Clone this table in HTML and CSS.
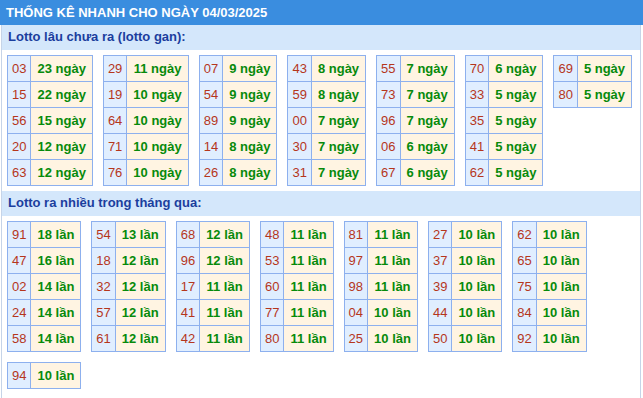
FILE: index.html
```html
<!DOCTYPE html>
<html lang="vi">
<head>
<meta charset="utf-8">
<title>Thống kê nhanh</title>
<link rel="stylesheet" href="styles.css">
</head>
<body>
<div class="header">THỐNG KÊ NHANH CHO NGÀY 04/03/2025</div>
<div class="box">
  <div class="band">Lotto lâu chưa ra (lotto gan):</div>
  <div class="grid">
    <table class="tb"><tr><td class="n">03</td><td class="v">23 ngày</td></tr><tr><td class="n">15</td><td class="v">22 ngày</td></tr><tr><td class="n">56</td><td class="v">15 ngày</td></tr><tr><td class="n">20</td><td class="v">12 ngày</td></tr><tr><td class="n">63</td><td class="v">12 ngày</td></tr></table>
    <table class="tb"><tr><td class="n">29</td><td class="v">11 ngày</td></tr><tr><td class="n">19</td><td class="v">10 ngày</td></tr><tr><td class="n">64</td><td class="v">10 ngày</td></tr><tr><td class="n">71</td><td class="v">10 ngày</td></tr><tr><td class="n">76</td><td class="v">10 ngày</td></tr></table>
    <table class="tb"><tr><td class="n">07</td><td class="v">9 ngày</td></tr><tr><td class="n">54</td><td class="v">9 ngày</td></tr><tr><td class="n">89</td><td class="v">9 ngày</td></tr><tr><td class="n">14</td><td class="v">8 ngày</td></tr><tr><td class="n">26</td><td class="v">8 ngày</td></tr></table>
    <table class="tb"><tr><td class="n">43</td><td class="v">8 ngày</td></tr><tr><td class="n">59</td><td class="v">8 ngày</td></tr><tr><td class="n">00</td><td class="v">7 ngày</td></tr><tr><td class="n">30</td><td class="v">7 ngày</td></tr><tr><td class="n">31</td><td class="v">7 ngày</td></tr></table>
    <table class="tb"><tr><td class="n">55</td><td class="v">7 ngày</td></tr><tr><td class="n">73</td><td class="v">7 ngày</td></tr><tr><td class="n">96</td><td class="v">7 ngày</td></tr><tr><td class="n">06</td><td class="v">6 ngày</td></tr><tr><td class="n">67</td><td class="v">6 ngày</td></tr></table>
    <table class="tb"><tr><td class="n">70</td><td class="v">6 ngày</td></tr><tr><td class="n">33</td><td class="v">5 ngày</td></tr><tr><td class="n">35</td><td class="v">5 ngày</td></tr><tr><td class="n">41</td><td class="v">5 ngày</td></tr><tr><td class="n">62</td><td class="v">5 ngày</td></tr></table>
    <table class="tb"><tr><td class="n">69</td><td class="v">5 ngày</td></tr><tr><td class="n">80</td><td class="v">5 ngày</td></tr></table>
  </div>
  <div class="band">Lotto ra nhiều trong tháng qua:</div>
  <div class="grid">
    <table class="tb"><tr><td class="n">91</td><td class="v">18 lần</td></tr><tr><td class="n">47</td><td class="v">16 lần</td></tr><tr><td class="n">02</td><td class="v">14 lần</td></tr><tr><td class="n">24</td><td class="v">14 lần</td></tr><tr><td class="n">58</td><td class="v">14 lần</td></tr></table>
    <table class="tb"><tr><td class="n">54</td><td class="v">13 lần</td></tr><tr><td class="n">18</td><td class="v">12 lần</td></tr><tr><td class="n">32</td><td class="v">12 lần</td></tr><tr><td class="n">57</td><td class="v">12 lần</td></tr><tr><td class="n">61</td><td class="v">12 lần</td></tr></table>
    <table class="tb"><tr><td class="n">68</td><td class="v">12 lần</td></tr><tr><td class="n">96</td><td class="v">12 lần</td></tr><tr><td class="n">17</td><td class="v">11 lần</td></tr><tr><td class="n">41</td><td class="v">11 lần</td></tr><tr><td class="n">42</td><td class="v">11 lần</td></tr></table>
    <table class="tb"><tr><td class="n">48</td><td class="v">11 lần</td></tr><tr><td class="n">53</td><td class="v">11 lần</td></tr><tr><td class="n">60</td><td class="v">11 lần</td></tr><tr><td class="n">77</td><td class="v">11 lần</td></tr><tr><td class="n">80</td><td class="v">11 lần</td></tr></table>
    <table class="tb"><tr><td class="n">81</td><td class="v">11 lần</td></tr><tr><td class="n">97</td><td class="v">11 lần</td></tr><tr><td class="n">98</td><td class="v">11 lần</td></tr><tr><td class="n">04</td><td class="v">10 lần</td></tr><tr><td class="n">25</td><td class="v">10 lần</td></tr></table>
    <table class="tb"><tr><td class="n">27</td><td class="v">10 lần</td></tr><tr><td class="n">37</td><td class="v">10 lần</td></tr><tr><td class="n">39</td><td class="v">10 lần</td></tr><tr><td class="n">44</td><td class="v">10 lần</td></tr><tr><td class="n">50</td><td class="v">10 lần</td></tr></table>
    <table class="tb"><tr><td class="n">62</td><td class="v">10 lần</td></tr><tr><td class="n">65</td><td class="v">10 lần</td></tr><tr><td class="n">75</td><td class="v">10 lần</td></tr><tr><td class="n">84</td><td class="v">10 lần</td></tr><tr><td class="n">92</td><td class="v">10 lần</td></tr></table>
    <table class="tb"><tr><td class="n">94</td><td class="v">10 lần</td></tr></table>
  </div>
</div>
</body>
</html>
```
FILE: styles.css
```css
html, body {
  margin: 0;
  padding: 0;
  background: #ffffff;
  font-family: "Liberation Sans", Arial, sans-serif;
  font-size: 13px;
}
.header {
  height: 25px;
  line-height: 25px;
  background: #3a8ddf;
  color: #ffffff;
  font-weight: bold;
  font-size: 13px;
  padding-left: 6px;
  white-space: nowrap;
}
.box {
  margin: 0 2px 0 1px;
  border-left: 1px solid #c6d4e8;
  border-right: 1px solid #c6d4e8;
  min-height: 373px;
}
.band {
  height: 25px;
  line-height: 24px;
  background: #d4e7fb;
  color: #1b3e9e;
  font-weight: bold;
  padding-left: 6px;
}
.grid {
  display: flex;
  flex-wrap: wrap;
  align-items: flex-start;
  gap: 10px 10px;
  padding: 5px 2px 5px 5px;
}
.tb {
  border-collapse: collapse;
}
.tb td {
  border: 1px solid #8db0ee;
  height: 25px;
  padding: 0;
  text-align: center;
  white-space: nowrap;
}
.tb td.n {
  background: #e0eeff;
  color: #b5361c;
  padding: 0 4px;
}
.tb td.v {
  background: #fff4e2;
  color: #078a0b;
  font-weight: bold;
  padding: 0 6px;
}
```
